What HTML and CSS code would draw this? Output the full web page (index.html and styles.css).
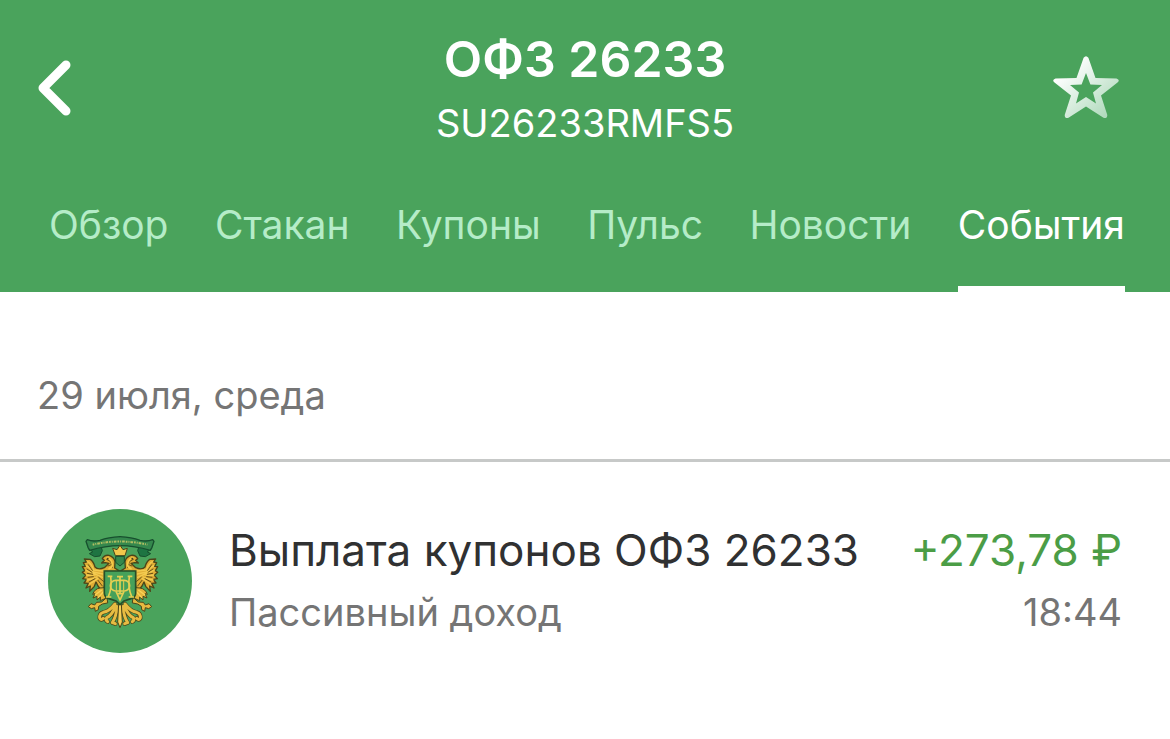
FILE: index.html
```html
<!DOCTYPE html>
<html lang="ru">
<head>
	<title>ОФЗ 26233</title>
	<meta charset="UTF-8">
	<meta name="viewport" content="width=device-width, initial-scale=1">
	<link rel="stylesheet" href="styles.css">
</head>
<body>
	<header class="header">
		<div class="topBar">
			<button class="iconButton" type="button" aria-label="Назад">
				<svg class="backIcon" viewBox="0 0 34 56" aria-hidden="true">
					<path d="M28 5 L5 28 L28 51"/>
				</svg>
			</button>
			<div class="heading">
				<h1 class="title">ОФЗ 26233</h1>
				<div class="ticker">SU26233RMFS5</div>
			</div>
			<button class="iconButton iconButtonRight" type="button" aria-label="В избранное">
				<svg class="starIcon" viewBox="0 0 66 64" aria-hidden="true">
					<defs>
						<linearGradient id="starFill" x1="0" y1="0" x2="1" y2="1">
							<stop offset="0.2" stop-color="#ffffff"/>
							<stop offset="1" stop-color="#a3d4b1"/>
						</linearGradient>
					</defs>
					<path fill="url(#starFill)" fill-rule="evenodd" d="M30.600 1.800Q33 -1.200 35.400 1.800L42.500 22L63.500 22.500Q67.500 24 64.500 26.500L48 39.500L54.300 59Q54.300 63 50.500 61.800L33 50.500L15.500 61.800Q11.700 63 11.700 59L18 39.500L1.500 26.500Q-1.500 24 2.500 22.500L23.500 22Z M33 17L28.600 28.500L17 29.100L26 36.600L23 47.500L33 41L43 47.500L40 36.600L49 29.100L37.400 28.500Z"/>
				</svg>
			</button>
		</div>
		<nav class="tabs">
			<a class="tab" href="#overview">Обзор</a>
			<a class="tab" href="#orderbook">Стакан</a>
			<a class="tab" href="#coupons">Купоны</a>
			<a class="tab" href="#pulse">Пульс</a>
			<a class="tab" href="#news">Новости</a>
			<a class="tab tabActive" href="#events" aria-current="page">События</a>
		</nav>
	</header>
	<main>
		<h2 class="date">29 июля, среда</h2>
		<div class="event">
			<!-- герб: левая половина рисуется один раз и отражается -->
			<svg class="logo" viewBox="24 27 432 432" aria-hidden="true">
				<circle cx="240" cy="243" r="216" fill="#4aa35c"/>
				<defs>
					<g id="half" stroke-linejoin="round" stroke-linecap="round">
						<path fill="#1e7442" stroke="#174f2e" stroke-width="3" d="M146 145L184 142L187 152L180 168L164 170L148 161L157 156Z"/>
						<path fill="#35884d" stroke="#174f2e" stroke-width="4" d="M240 110Q205 112 180 121Q158 126 142 119L138 124L144 142L149 151Q196 137 240 137"/>
						<path fill="#e0ad35" stroke="#4c4518" stroke-width="4" d="M240 214L224 204L225 185Q222 171 207 166Q193 164 187 176L193 181L185 189L196 188L207 190L193 203Q174 211 165 201Q161 185 151 178L133 177L139 186L130 188L136 199L127 200L134 212L127 217L137 226L128 236L140 238L132 249L145 250L138 264L151 258L149 274L163 259L168 246L174 258L182 268L190 273L195 250L195 214Z"/>
						<path fill="none" stroke="#f3cb50" stroke-width="4" d="M143 185Q155 192 161 210L189 213M139 197Q151 204 160 216L188 222M138 211Q151 217 163 221L187 232M139 225Q153 228 167 224M141 240Q157 238 170 231M148 252Q162 245 174 235"/>
						<path fill="none" stroke="#665017" stroke-width="3" d="M145 194L157 211M141 207L156 217M142 220L158 223M144 232L160 230M147 246L165 236M174 241L187 258M176 232L190 244M200 178L212 185L217 203M204 198L216 193"/>
						<path fill="none" stroke="#f6cc4c" stroke-width="5" d="M201 174Q215 176 217 194Q217 202 207 206"/>
						<circle cx="203" cy="176" r="3" fill="#4c4518"/>
						<path fill="#e4b53b" stroke="#4c4518" stroke-width="3" d="M193 263L180 264Q164 266 158 283L165 281L159 294L171 289L171 300L181 291L181 302L197 295Z"/>
						<path fill="none" stroke="#f8d45a" stroke-width="4" d="M166 284L184 271M175 292L190 276"/>
						<path fill="#e6b940" stroke="#4c4518" stroke-width="3" d="M200 293L185 306L170 307L164 315L153 311L145 320L154 326L164 323L166 334L175 329L176 319L187 312L202 309Z"/>
						<path fill="none" stroke="#4c4518" stroke-width="13" d="M225 312Q207 335 190 337Q178 340 179 354Q183 363 190 355M228 318Q214 348 200 353Q196 361 203 365M233 320Q227 352 217 368L226 371"/>
						<path fill="none" stroke="#e6bc42" stroke-width="9" d="M225 312Q207 335 190 337Q178 340 179 354Q183 363 190 355M228 318Q214 348 200 353Q196 361 203 365M233 320Q227 352 217 368L226 371"/>
					</g>
				</defs>
				<use href="#half"/>
				<use href="#half" transform="translate(480 0) scale(-1 1)"/>
				<path fill="none" stroke="#b2be62" stroke-width="6" stroke-dasharray="5 3 3 3 8 3" d="M158 134Q240 115 322 134"/>
				<path fill="#f1c74b" stroke="#4c4518" stroke-width="3" d="M226 167L218 145L231 149L240 136L249 149L262 145L255 167Z"/>
				<path fill="#35884d" stroke="#174f2e" stroke-width="3" d="M227 169H253V187L240 198L227 187Z"/>
				<path fill="#f3ce55" stroke="#4c4518" stroke-width="3" d="M236 311H244L247 366L240 383L233 366Z"/>
				<path fill="#46a15a" stroke="#264f29" stroke-width="5" d="M193 213H287V279Q287 292 273 296L252 303L240 314L228 303L207 296Q193 292 193 279Z"/>
				<!-- монограмма -->
				<g fill="none" stroke="#e3cf52" stroke-width="5">
					<path d="M203 229H217M263 229H277M212 230Q217 262 205 290M198 291H214M268 230Q263 262 275 290M266 291H282M228 274L240 300L252 274"/>
					<path d="M240 231V281M231 230H249M232 281H248"/>
					<rect x="211" y="241" width="58" height="32" rx="16"/>
					<path stroke-width="3" d="M229 242V272M251 242V272"/>
				</g>
			</svg>
			<div class="eventText">
				<div class="eventTitle">Выплата купонов ОФЗ 26233</div>
				<div class="eventNote">Пассивный доход</div>
			</div>
			<div class="eventSum">
				<div class="eventTitle income">+273,78 ₽</div>
				<time class="eventNote" datetime="18:44">18:44</time>
			</div>
		</div>
	</main>
</body>
</html>
```

FILE: styles.css
```css
* {
	box-sizing: border-box;
}
body {
	margin: 0;
	background: #ffffff;
	font-family: Inter, "Noto Sans", Arial, sans-serif;
	color: #303132;
}
.header {
	background: #4aa35c;
	color: #ffffff;
}
.topBar {
	display: grid;
	grid-template-columns: 1fr auto 1fr;
	align-items: center;
	padding: 21px 38px 0;
}
.iconButton {
	display: flex;
	justify-self: start;
	padding: 0;
	border: 0;
	background: none;
	cursor: pointer;
}
.iconButtonRight {
	justify-self: end;
	padding-right: 13px;
}
.backIcon {
	width: 34px;
	height: 56px;
	fill: none;
	stroke: #ffffff;
	stroke-width: 9;
	stroke-linecap: round;
	stroke-linejoin: round;
}
.starIcon {
	width: 66px;
	height: 64px;
}
.heading {
	padding-top: 6px;
	text-align: center;
}
.title {
	margin: 0;
	font-size: 50px;
	font-weight: 600;
	line-height: 64px;
}
.ticker {
	font-size: 38px;
	line-height: 64px;
}
.tabs {
	display: flex;
	justify-content: space-between;
	padding: 44px 45px 0 49px;
}
.tab {
	padding-bottom: 35px;
	border-bottom: 6px solid transparent;
	font-size: 39px;
	line-height: 52px;
	color: #b5ecc8;
	text-decoration: none;
}
.tabActive {
	border-color: #ffffff;
	color: #ffffff;
}
.date {
	margin: 0;
	padding: 77px 37px 38px;
	border-bottom: 3px solid #c7c9c8;
	font-size: 38px;
	font-weight: 400;
	line-height: 52px;
	color: #757575;
}
.event {
	display: flex;
	align-items: center;
	padding: 47px 48px 47px;
}
.logo {
	flex: none;
	width: 144px;
	height: 144px;
	margin-right: 37px;
}
.eventText {
	flex: 1;
}
.eventSum {
	text-align: right;
}
.eventTitle {
	font-size: 44px;
	line-height: 62px;
}
.eventNote {
	display: block;
	font-size: 38px;
	line-height: 62px;
	color: #757575;
}
.income {
	color: #4b9d46;
}
```
